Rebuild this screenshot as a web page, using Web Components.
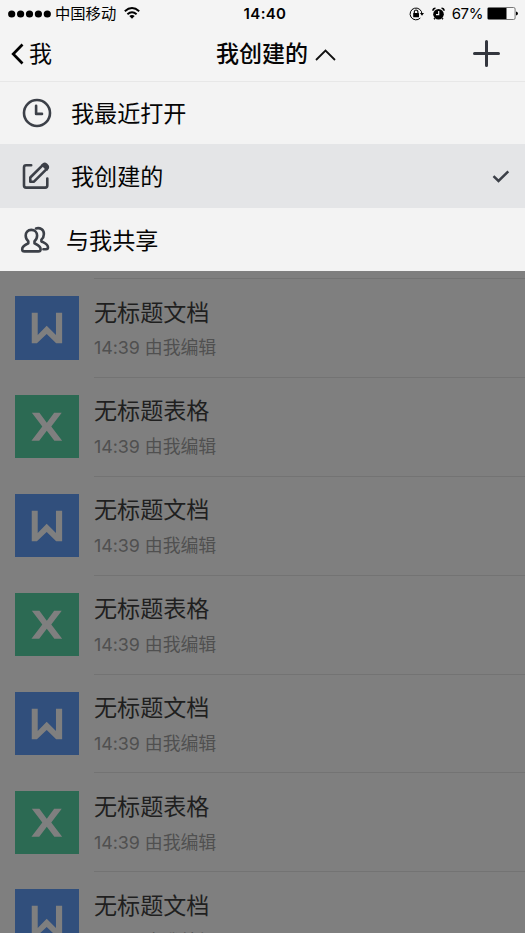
<!DOCTYPE html>
<html lang="zh-CN">
<head>
<meta charset="utf-8">
<title>我创建的</title>
<style>
html,body{margin:0;height:100%;overflow:hidden}
body{font-family:Inter,"Noto Sans CJK SC",sans-serif;color:#050505;background:#7f7f7f}
</style>
</head>
<body>
<docs-app></docs-app>
<script>
const define = (name, html, setup) => customElements.define(name, class extends HTMLElement {
  constructor() {
    super();
    this.attachShadow({mode: 'open'}).innerHTML = html;
  }
  connectedCallback() { if (setup) setup(this, this.shadowRoot); }
});

define('status-bar', `
<style>
:host{display:grid;grid-template-columns:1fr auto 1fr;align-items:center;height:26px;box-sizing:border-box;padding:0 7px 0 8px;font-size:15px;line-height:26px;color:#000}
.l,.r{display:flex;align-items:center}
.l{margin-right:-4px}
.r{justify-content:flex-end}
svg{display:block;flex:none}
.carrier{margin-left:4px;font-size:15.3px}
.time{font-weight:600;font-size:15px;letter-spacing:.35px;margin-left:4px;padding-top:1px}
.pct{font-size:15px;margin:0 4px 0 7px;letter-spacing:-.4px;padding-top:1px}
</style>
<div class="l">
<svg width="43" height="8" viewBox="0 0 43 8"><g fill="#000"><circle cx="3.7" cy="4" r="3.6"/><circle cx="12.6" cy="4" r="3.6"/><circle cx="21.5" cy="4" r="3.6"/><circle cx="30.4" cy="4" r="3.6"/><circle cx="39.3" cy="4" r="3.6"/></g></svg>
<span class="carrier">中国移动</span>
<svg style="margin-left:8px;margin-top:-2px" width="16" height="12" viewBox="0 0 16 12"><g fill="none" stroke="#000" stroke-width="1.9"><path d="M.8 4.3Q8-2.1 15.2 4.3"/><path d="M3.4 7.3Q8 3.1 12.6 7.3"/></g><path d="M5.3 9.1Q8 6.9 10.7 9.1L8 11.8Z"/></svg>
</div>
<span class="time">14:40</span>
<div class="r">
<svg width="15" height="14" viewBox="0 0 15 14"><path d="M12.9 7A5.9 5.9 0 1 0 11.3 11" fill="none" stroke="#000" stroke-width="1"/><path d="M10.9 6h4.1l-2 2.7z"/><rect x="4.2" y="6" width="5.8" height="4.2" rx=".5"/><path d="M5.3 6.5V4.8a1.8 1.8 0 0 1 3.6 0v1.7" fill="none" stroke="#000" stroke-width="1.1"/></svg>
<svg style="margin-left:8px" width="13" height="14" viewBox="0 0 13 14"><circle cx="6.5" cy="7.2" r="5.3"/><path d="M.9 3.7A2.6 2.6 0 0 1 3.5 1.3M9.5 1.3a2.6 2.6 0 0 1 2.6 2.4M2.8 11.2l-.7 1M10.2 11.2l.7 1" fill="none" stroke="#000" stroke-width="1.5"/><path d="M6.7 4v3.6H4" fill="none" stroke="#f4f4f4" stroke-width="1.2"/></svg>
<span class="pct">67%</span>
<svg width="31" height="13" viewBox="0 0 31 13"><rect x=".5" y=".5" width="27.6" height="12" rx="1.5" fill="#f8f8f8" stroke="#777"/><path d="M1 1h18.5v11H1z"/><path d="M29 4.4q2 .4 2 2.1t-2 2.1z"/></svg>
</div>`);

define('nav-bar', `
<style>
:host{display:grid;grid-template-columns:1fr auto 1fr;align-items:center;height:56px;box-sizing:border-box;border-bottom:1px solid #e7e7e7;padding:0 25px 0 11px;font-size:23px;line-height:56px}
.back,.title{display:flex;align-items:center}
svg{display:block;flex:none}
.title{font-weight:500;margin-left:41px}
.add{justify-self:end;margin-top:-1px}
</style>
<div class="back"><svg style="margin-top:-1px" width="13" height="22" viewBox="0 0 13 22"><path d="M11.5 1.5L2.2 11l9.3 9.5" fill="none" stroke="#000" stroke-width="2.7"/></svg><span style="margin-left:5px">我</span></div>
<div class="title"><slot></slot><svg style="margin-left:7px;margin-top:2px" width="21" height="12" viewBox="0 0 21 12"><path d="M1 11L10.5 1.5 20 11" fill="none" stroke="#111" stroke-width="1.8"/></svg></div>
<svg class="add" width="27" height="27" viewBox="0 0 27 27"><path d="M13.5 1.5v24M1.5 13.5h24" stroke="#33363e" stroke-width="3" stroke-linecap="round"/></svg>`);

const menuIcons = {
  clock: '<circle cx="15" cy="15" r="13"/><path d="M14.1 7.8v8.1h5.9"/>',
  edit: '<path d="M9.2 4.3H4.1Q2 4.3 2 6.4v18.1q0 2.1 2.1 2.1h19.1q2.1 0 2.1-2.1V17.6M8.3 20.8v-4.3L21.5 3.3q1.3-1 2.6.2l1.1 1.2q1.2 1.3.1 2.6L12.2 20.3q-.5.5-1 .5z"/><path d="M20 4l5 5 1.3-3-3.3-3.2z" fill="#3c4048" stroke-width="1.6"/>',
  people: '<path d="M11.3 4.9c-3.7 0-5.6 2.5-5.6 5.6 0 2.6 1 4.4 2.6 5.8v2c-2 1.2-6.1 2.4-6.1 5.9 0 1.4.8 2.2 2.3 2.2h13.8c1.5 0 2.3-.8 2.3-2.2 0-3.5-4.1-4.7-6.1-5.9v-2c1.6-1.4 2.6-3.2 2.6-5.8 0-3.1-2.1-5.6-5.8-5.6z"/><path d="M16 3.4c4.2-1 7.9 1.2 7.9 5.5 0 2.5-1 4.3-2.5 5.7v1.7c2 1.3 6.6 2.8 6.6 6 0 1.3-.8 2-2 2h-2.6"/>'
};
define('menu-option', `
<style>
:host{display:flex;align-items:center;height:63px;box-sizing:border-box;padding:0 15px 0 22px;background:#f3f3f3;font-size:23.1px;line-height:62px}
:host([selected]){height:64px;background:#e4e5e7}
:host([icon=people]){padding-left:20px}
:host([icon=people]) .i{margin-right:16px}
.label{padding-top:2px}
.i{width:30px;height:30px;flex:none;margin-right:19px;fill:none;stroke:#3c4048;stroke-width:2.6;stroke-linecap:round;stroke-linejoin:round}
.c{display:none;margin-left:auto}
:host([selected]) .c{display:block}
</style>
<svg class="i" viewBox="0 0 30 30"></svg><span class="label"><slot></slot></span>
<svg class="c" width="18" height="13" viewBox="0 0 18 13"><path d="M1.5 6.2l5 4.8L16.3 1.4" fill="none" stroke="#3c4048" stroke-width="2.5"/></svg>`,
(el, root) => { root.querySelector('.i').innerHTML = menuIcons[el.getAttribute('icon')]; });

const fileGlyphs = {
  doc: '<path d="M16.7 16.8h6V39l9-9.2 9.3 9.2V16.8h6.2v30.5H41.2L31.7 38l-9.8 9.3h-5.2z"/>',
  sheet: '<path d="M16.8 17.9h7.6l7.4 9.9 7.4-9.9h7.6L36.3 31.6 47.2 45.9h-7.8l-7.6-10.1-7.6 10.1h-7.8l10.9-14.3z"/>'
};
define('file-row', `
<style>
:host{display:flex;height:98.9px;box-sizing:border-box;padding-left:15px}
.tile{display:block;width:63.7px;height:63.5px;flex:none;margin-top:17.1px;background:#314f7c;fill:#7f7f7f}
:host([kind=sheet]) .tile{background:#2c6a53}
.t{flex:1;margin-left:15.3px;border-bottom:1px solid #737373;box-sizing:border-box;display:flex;flex-direction:column;padding-top:16.6px}
.n{font-size:23.1px;line-height:34px;color:#1f1f1f}
.s{font-size:17.9px;line-height:26px;margin-top:5.6px;color:#505050;letter-spacing:-.05px}
</style>
<svg class="tile" viewBox="0 0 63.7 63.7"></svg>
<div class="t"><div class="n"><slot></slot></div><div class="s">14:39 由我编辑</div></div>`,
(el, root) => { root.querySelector('.tile').innerHTML = fileGlyphs[el.getAttribute('kind')]; });

define('docs-app', `
<style>
:host{display:flex;flex-direction:column;height:933px;overflow:hidden;background:#7f7f7f}
header{flex:none;background:#f4f4f4}
nav{flex:none;display:flex;flex-direction:column}
main{flex:1;min-height:0;overflow:hidden}
.first{height:8px;box-sizing:border-box;margin-left:94px;border-bottom:1px solid #737373}
file-row,menu-option{flex:none}
</style>
<header><status-bar></status-bar><nav-bar>我创建的</nav-bar></header>
<nav><menu-option icon="clock" style="height:62px">我最近打开</menu-option><menu-option icon="edit" selected>我创建的</menu-option><menu-option icon="people">与我共享</menu-option></nav>
<main><div class="first"></div>
<file-row kind="doc">无标题文档</file-row><file-row kind="sheet">无标题表格</file-row><file-row kind="doc">无标题文档</file-row><file-row kind="sheet">无标题表格</file-row><file-row kind="doc">无标题文档</file-row><file-row kind="sheet">无标题表格</file-row><file-row kind="doc">无标题文档</file-row></main>`);
</script>
</body>
</html>
